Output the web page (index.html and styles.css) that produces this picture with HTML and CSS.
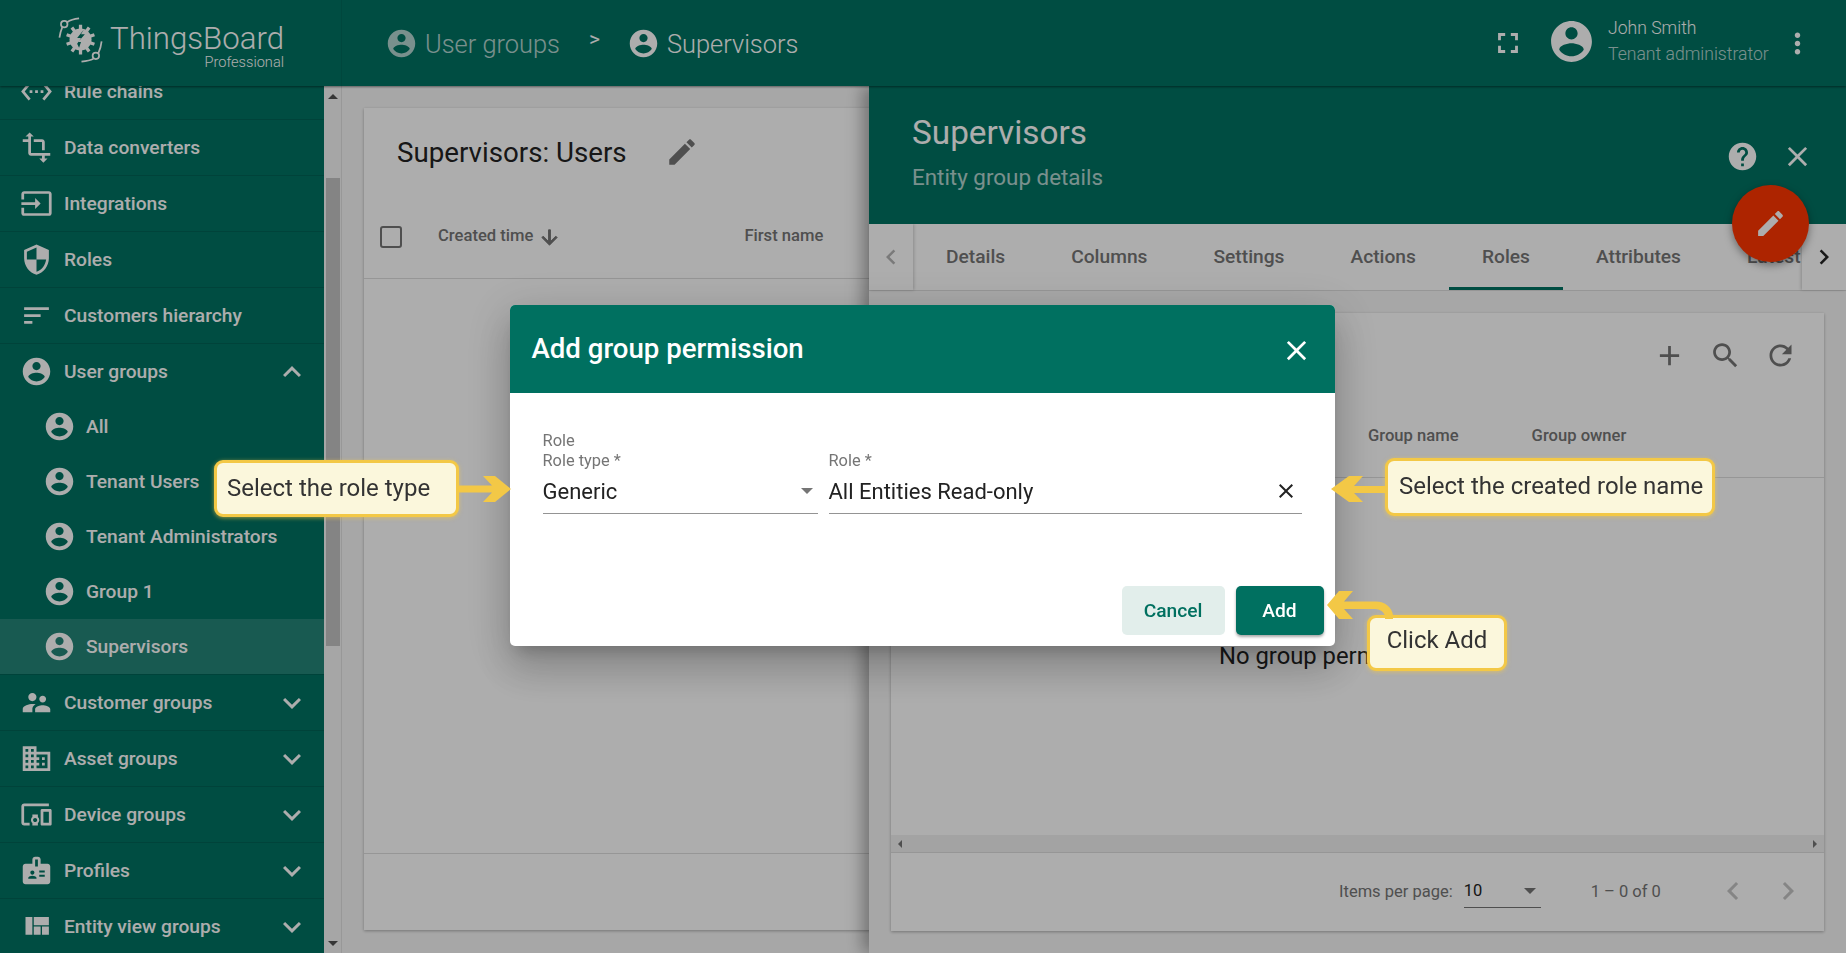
FILE: index.html
```html
<!doctype html>
<html lang="en">
<head>
<meta charset="utf-8">
<title>ThingsBoard - Add group permission</title>
<link rel="stylesheet" href="styles.css">
</head>
<body>

<svg class="sprite" xmlns="http://www.w3.org/2000/svg">
  <symbol id="i-account" viewBox="0 0 24 24"><path d="M12 2C6.48 2 2 6.48 2 12s4.48 10 10 10 10-4.48 10-10S17.52 2 12 2zm0 3c1.66 0 3 1.34 3 3s-1.34 3-3 3-3-1.34-3-3 1.34-3 3-3zm0 14.2c-2.5 0-4.71-1.28-6-3.22.03-1.99 4-3.08 6-3.08 1.99 0 5.97 1.09 6 3.08-1.29 1.94-3.5 3.22-6 3.22z"/></symbol>
  <symbol id="i-ethernet" viewBox="0 0 24 24"><path d="M7.77 6.76L6.23 5.48.82 12l5.41 6.52 1.54-1.28L3.42 12l4.35-5.24zM7 13h2v-2H7v2zm10-2h-2v2h2v-2zm-6 2h2v-2h-2v2zm6.77-7.52l-1.54 1.28L20.58 12l-4.35 5.24 1.54 1.28L23.18 12l-5.41-6.52z"/></symbol>
  <symbol id="i-transform" viewBox="0 0 24 24"><path d="M22 18v-2H8V4h2L7 1 4 4h2v2H2v2h4v8c0 1.1.9 2 2 2h8v2h-2l3 3 3-3h-2v-2h4zM10 8h6v6h2V8c0-1.1-.9-2-2-2h-6v2z"/></symbol>
  <symbol id="i-input" viewBox="0 0 24 24"><path d="M21 3.01H3c-1.1 0-2 .9-2 2V9h2V4.99h18v14.03H3V15H1v4.01c0 1.1.9 1.98 2 1.98h18c1.1 0 2-.88 2-1.98v-14c0-1.11-.9-2-2-2zM11 16l4-4-4-4v3H1v2h10v3z"/></symbol>
  <symbol id="i-security" viewBox="0 0 24 24"><path d="M12 1L3 5v6c0 5.55 3.84 10.74 9 12 5.16-1.26 9-6.45 9-12V5l-9-4zm0 10.99h7c-.53 4.12-3.28 7.79-7 8.94V12H5V6.3l7-3.11v8.8z"/></symbol>
  <symbol id="i-sort" viewBox="0 0 24 24"><path d="M3 18h6v-2H3v2zM3 6v2h18V6H3zm0 7h12v-2H3v2z"/></symbol>
  <symbol id="i-supervisor" viewBox="0 0 24 24"><path d="M16.5 12c1.38 0 2.49-1.12 2.49-2.5S17.88 7 16.5 7C15.12 7 14 8.12 14 9.5s1.12 2.5 2.5 2.5zM9 11c1.66 0 2.99-1.34 2.99-3S10.66 5 9 5C7.34 5 6 6.34 6 8s1.34 3 3 3zm7.5 3c-1.83 0-5.5.92-5.5 2.75V19h11v-2.25c0-1.83-3.67-2.75-5.5-2.75zM9 13c-2.33 0-7 1.17-7 3.5V19h7v-2.25c0-.85.33-2.34 2.37-3.47C10.5 13.1 9.66 13 9 13z"/></symbol>
  <symbol id="i-domain" viewBox="0 0 24 24"><path d="M12 7V3H2v18h20V7H12zM6 19H4v-2h2v2zm0-4H4v-2h2v2zm0-4H4V9h2v2zm0-4H4V5h2v2zm4 12H8v-2h2v2zm0-4H8v-2h2v2zm0-4H8V9h2v2zm0-4H8V5h2v2zm10 12h-8v-2h2v-2h-2v-2h2v-2h-2V9h8v10zm-2-8h-2v2h2v-2zm0 4h-2v2h2v-2z"/></symbol>
  <symbol id="i-devices" viewBox="0 0 24 24"><path d="M3 6h18V4H3c-1.1 0-2 .9-2 2v12c0 1.1.9 2 2 2h4v-2H3V6zm10 6H9v1.78c-.61.55-1 1.33-1 2.22s.39 1.67 1 2.22V20h4v-1.78c.61-.55 1-1.34 1-2.22s-.39-1.67-1-2.22V12zm-2 5.5c-.83 0-1.5-.67-1.5-1.5s.67-1.5 1.5-1.5 1.5.67 1.5 1.5-.67 1.5-1.5 1.5zM22 8h-6c-.5 0-1 .5-1 1v10c0 .5.5 1 1 1h6c.5 0 1-.5 1-1V9c0-.5-.5-1-1-1zm-1 10h-4v-8h4v8z"/></symbol>
  <symbol id="i-badge" viewBox="0 0 24 24"><path d="M20 7h-5V4c0-1.1-.9-2-2-2h-2c-1.1 0-2 .9-2 2v3H4c-1.1 0-2 .9-2 2v11c0 1.1.9 2 2 2h16c1.1 0 2-.9 2-2V9c0-1.1-.9-2-2-2zM9 12c.83 0 1.5.67 1.5 1.5S9.83 15 9 15s-1.5-.67-1.5-1.5S8.17 12 9 12zm3 6H6v-.75c0-1 2-1.5 3-1.5s3 .5 3 1.5V18zm1-9h-2V4h2v5zm5 7.5h-4V15h4v1.5zm0-3h-4V12h4v1.5z"/></symbol>
  <symbol id="i-quilt" viewBox="0 0 24 24"><path d="M10 18h5v-6h-5v6zm-6 0h5V5H4v13zm12 0h5v-6h-5v6zM10 5v6h11V5H10z"/></symbol>
  <symbol id="i-more" viewBox="0 0 24 24"><path d="M16.59 8.59L12 13.17 7.41 8.59 6 10l6 6 6-6z"/></symbol>
  <symbol id="i-less" viewBox="0 0 24 24"><path d="M12 8l-6 6 1.41 1.41L12 10.83l4.59 4.58L18 14z"/></symbol>
  <symbol id="i-fullscreen" viewBox="0 0 24 24"><path d="M7 14H5v5h5v-2H7v-3zm-2-4h2V7h3V5H5v5zm12 7h-3v2h5v-5h-2v3zM14 5v2h3v3h2V5h-5z"/></symbol>
  <symbol id="i-dots" viewBox="0 0 24 24"><path d="M12 8c1.1 0 2-.9 2-2s-.9-2-2-2-2 .9-2 2 .9 2 2 2zm0 2c-1.1 0-2 .9-2 2s.9 2 2 2 2-.9 2-2-.9-2-2-2zm0 6c-1.1 0-2 .9-2 2s.9 2 2 2 2-.9 2-2-.9-2-2-2z"/></symbol>
  <symbol id="i-help" viewBox="0 0 24 24"><path d="M12 2C6.48 2 2 6.48 2 12s4.48 10 10 10 10-4.48 10-10S17.52 2 12 2zm1 17h-2v-2h2v2zm2.07-7.75l-.9.92C13.45 12.9 13 13.5 13 15h-2v-.5c0-1.1.45-2.1 1.17-2.83l1.24-1.26c.37-.36.59-.86.59-1.41 0-1.1-.9-2-2-2s-2 .9-2 2H8c0-2.21 1.79-4 4-4s4 1.79 4 4c0 .88-.36 1.68-.93 2.25z"/></symbol>
  <symbol id="i-close" viewBox="0 0 24 24"><path d="M19 6.41L17.59 5 12 10.59 6.41 5 5 6.41 10.59 12 5 17.59 6.41 19 12 13.41 17.59 19 19 17.59 13.41 12z"/></symbol>
  <symbol id="i-edit" viewBox="0 0 24 24"><path d="M3 17.25V21h3.75L17.81 9.94l-3.75-3.75L3 17.25zM20.71 7.04c.39-.39.39-1.02 0-1.41l-2.34-2.34c-.39-.39-1.02-.39-1.41 0l-1.83 1.83 3.75 3.75 1.83-1.83z"/></symbol>
  <symbol id="i-add" viewBox="0 0 24 24"><path d="M19 13h-6v6h-2v-6H5v-2h6V5h2v6h6v2z"/></symbol>
  <symbol id="i-search" viewBox="0 0 24 24"><path d="M15.5 14h-.79l-.28-.27C15.41 12.59 16 11.11 16 9.5 16 5.91 13.09 3 9.5 3S3 5.91 3 9.5 5.91 16 9.5 16c1.61 0 3.09-.59 4.23-1.57l.27.28v.79l5 4.99L20.49 19l-4.99-5zm-6 0C7.01 14 5 11.99 5 9.5S7.01 5 9.5 5 14 7.01 14 9.5 11.99 14 9.5 14z"/></symbol>
  <symbol id="i-refresh" viewBox="0 0 24 24"><path d="M17.65 6.35C16.2 4.9 14.21 4 12 4c-4.42 0-7.99 3.58-7.99 8s3.57 8 7.99 8c3.73 0 6.84-2.55 7.73-6h-2.08c-.82 2.33-3.04 4-5.65 4-3.31 0-6-2.69-6-6s2.69-6 6-6c1.66 0 3.14.69 4.22 1.78L13 11h7V4l-2.35 2.35z"/></symbol>
  <symbol id="i-down" viewBox="0 0 24 24"><path d="M20 12l-1.41-1.41L13 16.17V4h-2v12.17l-5.58-5.59L4 12l8 8 8-8z"/></symbol>
  <symbol id="i-left" viewBox="0 0 24 24"><path d="M15.41 7.41L14 6l-6 6 6 6 1.41-1.41L10.83 12z"/></symbol>
  <symbol id="i-right" viewBox="0 0 24 24"><path d="M10 6L8.59 7.41 13.17 12l-4.58 4.59L10 18l6-6z"/></symbol>
</svg>

<div class="page">

  <header class="topbar">
    <div class="logo">
      <svg class="logo-mark" viewBox="0 0 48 48" fill="none" stroke="#fff">
        <path d="M23.5 23.5V8M23.5 23.5l9-12.5M23.5 23.5l14.5-5M23.5 23.5l14.5 5M23.5 23.5l9 12.5M23.5 23.5V39M23.5 23.5l-9 12.5M23.5 23.5L9 28.5M23.5 23.5L9 18.5M23.5 23.5l-9-12.5" stroke-width="3.4"/>
        <circle cx="23.5" cy="23.5" r="11.5" fill="#fff" stroke="none"/>
        <path d="M27 13l-7 9h4l-4 6 2 4 2-6h-3l7-8h-4z" fill="#007262" stroke="none"/>
        <circle cx="6.5" cy="7.5" r="3.4" stroke-width="1.8"/>
        <circle cx="39.5" cy="40.5" r="3.4" stroke-width="1.8"/>
        <path d="M9.5 5.5C13 3 17 2 22 1.5M4.5 10.5C3 14 2 18 1.5 21.5M42 38C44 34 45 30 45.5 25.5M37 43.5C33 45.5 29 46 24.5 46.5" stroke-width="1.8"/>
      </svg>
      <div class="logo-text">
        <span class="logo-name">ThingsBoard</span>
        <span class="logo-sub">Professional</span>
      </div>
    </div>
    <div class="crumbs">
      <svg class="ic crumb-dim"><use href="#i-account"/></svg>
      <span class="crumb-label crumb-dim">User groups</span>
      <span class="crumb-sep">&gt;</span>
      <svg class="ic"><use href="#i-account"/></svg>
      <span class="crumb-label">Supervisors</span>
    </div>
    <div class="user-box">
      <svg class="ic ic-full"><use href="#i-fullscreen"/></svg>
      <svg class="ic-avatar"><use href="#i-account"/></svg>
      <div class="user-text">
        <div class="user-name">John Smith</div>
        <div class="user-role">Tenant administrator</div>
      </div>
      <svg class="ic ic-menu"><use href="#i-dots"/></svg>
    </div>
  </header>

  <div class="middle">
    <nav class="sidebar">
      <div class="nav-scroll">
        <ul class="nav-list">
          <li class="nav-item"><svg class="ic"><use href="#i-ethernet"/></svg>Rule chains</li>
          <li class="nav-item"><svg class="ic"><use href="#i-transform"/></svg>Data converters</li>
          <li class="nav-item"><svg class="ic"><use href="#i-input"/></svg>Integrations</li>
          <li class="nav-item"><svg class="ic"><use href="#i-security"/></svg>Roles</li>
          <li class="nav-item"><svg class="ic"><use href="#i-sort"/></svg>Customers hierarchy</li>
          <li class="nav-item nav-open">
            <div class="nav-head"><svg class="ic"><use href="#i-account"/></svg>User groups<svg class="ic nav-chev"><use href="#i-less"/></svg></div>
            <ul class="nav-sub">
              <li><svg class="ic"><use href="#i-account"/></svg>All</li>
              <li><svg class="ic"><use href="#i-account"/></svg>Tenant Users</li>
              <li><svg class="ic"><use href="#i-account"/></svg>Tenant Administrators</li>
              <li><svg class="ic"><use href="#i-account"/></svg>Group 1</li>
              <li class="active"><svg class="ic"><use href="#i-account"/></svg>Supervisors</li>
            </ul>
          </li>
          <li class="nav-item"><svg class="ic"><use href="#i-supervisor"/></svg>Customer groups<svg class="ic nav-chev"><use href="#i-more"/></svg></li>
          <li class="nav-item"><svg class="ic"><use href="#i-domain"/></svg>Asset groups<svg class="ic nav-chev"><use href="#i-more"/></svg></li>
          <li class="nav-item"><svg class="ic"><use href="#i-devices"/></svg>Device groups<svg class="ic nav-chev"><use href="#i-more"/></svg></li>
          <li class="nav-item"><svg class="ic"><use href="#i-badge"/></svg>Profiles<svg class="ic nav-chev"><use href="#i-more"/></svg></li>
          <li class="nav-item"><svg class="ic"><use href="#i-quilt"/></svg>Entity view groups<svg class="ic nav-chev"><use href="#i-more"/></svg></li>
        </ul>
      </div>
      <div class="vscroll">
        <span class="vscroll-up"></span>
        <span class="vscroll-thumb"></span>
        <span class="vscroll-down"></span>
      </div>
    </nav>

    <main class="content">
      <section class="card users-card">
        <div class="card-title">
          <span>Supervisors: Users</span>
          <svg class="ic ic-dark title-edit"><use href="#i-edit"/></svg>
        </div>
        <div class="table-head users-head">
          <span class="checkbox"></span>
          <span class="col-created">Created time</span>
          <svg class="ic-sort"><use href="#i-down"/></svg>
          <span class="col-first">First name</span>
        </div>
        <div class="grow"></div>
        <div class="users-foot"></div>
      </section>

      <aside class="drawer">
        <div class="drawer-head">
          <div class="drawer-title">Supervisors</div>
          <div class="drawer-sub">Entity group details</div>
          <div class="drawer-actions">
            <svg class="ic"><use href="#i-help"/></svg>
            <svg class="ic"><use href="#i-close"/></svg>
          </div>
        </div>
        <div class="fab"><svg class="ic"><use href="#i-edit"/></svg></div>
        <div class="tabs">
          <div class="tab-page tab-page-left"><svg class="ic"><use href="#i-left"/></svg></div>
          <div class="tab-list">
            <span class="tab">Details</span>
            <span class="tab">Columns</span>
            <span class="tab">Settings</span>
            <span class="tab">Actions</span>
            <span class="tab tab-active">Roles</span>
            <span class="tab">Attributes</span>
            <span class="tab">Latest telemetry</span>
          </div>
          <div class="tab-page tab-page-right"><svg class="ic"><use href="#i-right"/></svg></div>
        </div>
        <div class="drawer-body">
          <section class="card perm-card">
            <div class="perm-tools">
              <svg class="ic ic-dark"><use href="#i-add"/></svg>
              <svg class="ic ic-dark"><use href="#i-search"/></svg>
              <svg class="ic ic-dark"><use href="#i-refresh"/></svg>
            </div>
            <div class="table-head perm-head">
              <span class="col-group">Group name</span>
              <span class="col-owner">Group owner</span>
            </div>
            <div class="grow perm-empty">No group permissions</div>
            <div class="hscroll"><span class="hscroll-left"></span><span class="hscroll-right"></span></div>
            <div class="pager">
              <span class="pager-label">Items per page:</span>
              <span class="pager-select">10<i class="caret"></i></span>
              <span class="pager-range">1 – 0 of 0</span>
              <svg class="ic ic-faint pager-prev"><use href="#i-left"/></svg>
              <svg class="ic ic-faint pager-next"><use href="#i-right"/></svg>
            </div>
          </section>
        </div>
      </aside>
    </main>
  </div>
</div>

<div class="overlay">
  <div class="dialog">
    <div class="dialog-head">
      <span>Add group permission</span>
      <svg class="ic dialog-close"><use href="#i-close"/></svg>
    </div>
    <div class="dialog-body">
      <div class="group-label">Role</div>
      <div class="fields">
        <div class="field field-type">
          <label>Role type *</label>
          <div class="field-value">Generic<i class="caret"></i></div>
        </div>
        <div class="field field-role">
          <label>Role *</label>
          <div class="field-value">All Entities Read-only<svg class="field-clear"><use href="#i-close"/></svg></div>
        </div>
      </div>
    </div>
    <div class="dialog-actions">
      <button class="btn btn-cancel">Cancel</button>
      <button class="btn btn-add">Add</button>
    </div>
  </div>

  <!-- tutorial callouts -->
  <div class="callout callout-type">Select the role type</div>
  <svg class="arrow arrow-type" viewBox="0 0 52 26"><path d="M0 9.5H33L24 0H36L52 13 36 26H24L33 16.5H0z"/></svg>
  <div class="callout callout-role">Select the created role name</div>
  <svg class="arrow arrow-role" viewBox="0 0 54 26"><path d="M54 10H23L32 0H18L0 13 18 26H32L23 17H54z"/></svg>
  <div class="callout callout-add">Click Add</div>
  <svg class="arrow arrow-add" viewBox="0 0 66 28"><path d="M0 14L12 0H26L17 10.5H49c9 0 16 6 17 13.5v4h-8v-3c-1-4-5-7-10-7H17L26 28H12z"/></svg>
</div>

</body>
</html>
```

FILE: styles.css
```css
* {box-sizing: border-box;}
html, body {height: 100%;}
body {margin: 0; overflow: hidden; background: #f7f7f7; font-family: Roboto, "Liberation Sans", sans-serif; color: #222;}
ul {list-style: none; margin: 0; padding: 0;}
.sprite {display: none;}
.ic {width: 33px; height: 33px; fill: currentColor; flex: none;}
.ic-dark {color: #757575;}
.ic-faint {color: #c4c4c4;}
.grow {flex: 1;}

.page {display: flex; flex-direction: column; height: 953px;}

/* top bar */
.topbar {height: 86px; flex: none; display: flex; align-items: center; background: #007262; color: #fff; box-shadow: 0 1px 2px rgba(0,0,0,.45); position: relative; z-index: 2;}
.logo {width: 342px; height: 86px; flex: none; display: flex; padding: 17px 0 0 58px; border-right: 1px solid rgba(0,0,0,.08);}
.logo-mark {width: 46px; height: 46px; flex: none;}
.logo-text {display: flex; flex-direction: column; align-items: flex-end; margin-left: 6px; width: 174px;}
.logo-name {font-size: 31.2px; font-weight: 300; line-height: 38px; margin-top: 3px;}
.logo-sub {font-size: 14.6px; font-weight: 300; line-height: 14px; margin-top: -3px;}
.crumbs {display: flex; align-items: center; padding-left: 43px; flex: 1;}
.crumb-label {font-size: 25.4px; font-weight: 300; margin: 1px 0 0 7px;}
.crumb-dim {opacity: .7;}
.crumb-sep {font-size: 21px; margin: -8px 27px 0 29px;}
.user-box {display: flex; align-items: center; padding-right: 32px;}
.ic-full {width: 34px; height: 34px; margin-right: 22px;}
.ic-avatar {width: 49px; height: 49px; fill: currentColor; margin-top: -4px;}
.user-text {margin-left: 12px; width: 173px; margin-top: -4px;}
.user-name {font-size: 17.6px; font-weight: 300; line-height: 26px;}
.user-role {font-size: 17.6px; font-weight: 300; line-height: 26px; opacity: .7;}

/* sidebar */
.middle {flex: 1; display: flex; min-height: 0;}
.sidebar {width: 342px; flex: none; display: flex; background: #007262; color: #fff; overflow: hidden;}
.nav-scroll {width: 324px; overflow: hidden;}
.nav-list {margin-top: -22px;}
.nav-item {height: 56px; display: flex; align-items: center; padding-left: 20px; font-size: 19.2px; font-weight: 500; border-bottom: 1px solid rgba(0,0,0,.12);}
.nav-item > .ic:first-child, .nav-head > .ic:first-child {margin-right: 11px;}
.nav-sub .ic {margin-right: 10px;}
.nav-chev {width: 36px; height: 36px; margin-left: auto; margin-right: 14px;}
.nav-open {display: block; height: auto; padding: 0;}
.nav-head {height: 55px; display: flex; align-items: center; padding-left: 20px;}
.nav-sub li {height: 55px; display: flex; align-items: center; padding-left: 43px;}
.nav-sub .active {background: rgba(255,255,255,.14);}
.vscroll {width: 18px; background: #f5f5f5; display: flex; flex-direction: column; align-items: center; border-right: 1px solid #e0e0e0;}
.vscroll-up {border: 5px solid transparent; border-top: 0; border-bottom: 5px solid #505050; margin-top: 8px;}
.vscroll-thumb {width: 14px; height: 468px; background: #c3c3c3; margin-top: 79px;}
.vscroll-down {border: 5px solid transparent; border-bottom: 0; border-top: 5px solid #505050; margin-top: auto; margin-bottom: 7px;}

/* page content */
.content {flex: 1; position: relative; padding: 22px; min-width: 0;}
.card {background: #fff; box-shadow: 0 1px 3px rgba(0,0,0,.3); display: flex; flex-direction: column;}
.users-card {height: 822px;}
.card-title {height: 86px; flex: none; display: flex; align-items: center; padding: 2px 0 0 33px; font-size: 27.7px;}
.title-edit {width: 34px; height: 34px; margin-left: 38px;}
.table-head {flex: none; display: flex; align-items: center; font-size: 16.6px; font-weight: 500; color: #757575; border-bottom: 1px solid #ddd;}
.users-head {height: 85px; padding: 0 0 1px 16px;}
.checkbox {width: 22px; height: 22px; border: 2.5px solid #757575; border-radius: 3px; margin-top: 2px;}
.col-created {margin-left: 36px;}
.ic-sort {width: 23px; height: 23px; fill: #757575; stroke: #757575; stroke-width: 1; margin-left: 5px; margin-top: 4px;}
.col-first {margin-left: 183px;}
.users-foot {height: 77px; flex: none; border-top: 1px solid #ddd;}

/* details drawer */
.drawer {position: absolute; top: 0; right: 0; bottom: 0; width: 977px; background: #f7f7f7; display: flex; flex-direction: column; box-shadow: -6px 0 16px rgba(0,0,0,.35);}
.drawer-head {height: 138px; flex: none; background: #007262; color: #fff; position: relative; padding: 26px 0 0 43px;}
.drawer-title {font-size: 33.3px; line-height: 42px;}
.drawer-sub {font-size: 22.4px; line-height: 28px; opacity: .7; margin-top: 9px;}
.drawer-actions {position: absolute; top: 54px; right: 32px; display: flex; gap: 22px;}
.fab {position: absolute; top: 99px; right: 37px; width: 77px; height: 77px; border-radius: 50%; background: #ff3600; color: #fff; display: flex; align-items: center; justify-content: center; box-shadow: 0 3px 8px rgba(0,0,0,.4); z-index: 1;}
.tabs {height: 67px; flex: none; display: flex; background: #fff; border-bottom: 1px solid #ddd;}
.tab-page {width: 44px; flex: none; display: flex; align-items: center; justify-content: center;}
.tab-page .ic {width: 30px; height: 30px;}
.tab-page-left {color: #b4b4b4; box-shadow: 1px 0 3px rgba(0,0,0,.2);}
.tab-page-right {color: #222; box-shadow: -1px 0 3px rgba(0,0,0,.2);}
.tab-list {flex: 1; display: flex; overflow: hidden; white-space: nowrap;}
.tab {height: 66px; display: flex; align-items: center; padding: 0 33px 2px; font-size: 19.2px; font-weight: 500; color: #757575;}
.tab-active {border-bottom: 3px solid #007262; padding-top: 1px; padding-bottom: 0;}
.drawer-body {flex: 1; padding: 22px; min-height: 0; display: flex;}
.perm-card {flex: 1;}
.perm-tools {height: 84px; flex: none; display: flex; justify-content: flex-end; align-items: center; gap: 22.5px; padding: 0 27px 0 0;}
.perm-head {height: 81px; padding-bottom: 3px;}
.col-group {margin-left: 477px;}
.col-owner {margin-left: 73px;}
.perm-empty {display: flex; align-items: center; font-size: 23.8px; padding: 0 0 2px 328px;}
.hscroll {height: 18px; flex: none; background: #f0f0f0; border-bottom: 1px solid #ddd; display: flex; justify-content: space-between; align-items: center; padding: 0 7px;}
.hscroll-left {border: 4.5px solid transparent; border-left: 0; border-right: 4.5px solid #757575;}
.hscroll-right {border: 4.5px solid transparent; border-right: 0; border-left: 4.5px solid #757575;}
.pager {height: 78px; flex: none; display: flex; align-items: center; font-size: 16.5px; color: #757575; padding-left: 448px; padding-bottom: 2px;}
.pager-select {width: 77px; height: 34px; margin-left: 11px; display: flex; align-items: center; justify-content: space-between; color: #222; border-bottom: 1px solid #757575; padding-right: 5px;}
.caret {display: inline-block; border: 6px solid transparent; border-bottom: 0; border-top: 6px solid #757575;}
.pager-range {margin-left: 50px;}
.pager-prev {width: 36px; height: 36px; margin-left: 54px;}
.pager-next {width: 36px; height: 36px; margin-left: 19px;}

/* modal + callouts */
.overlay {position: fixed; inset: 0; z-index: 10; background: rgba(0,0,0,.32); display: flex; align-items: center; justify-content: center;}
.dialog {width: 825px; height: 341px; margin: 0 2px 2px 0; background: #fff; border-radius: 5px; overflow: hidden; display: flex; flex-direction: column; box-shadow: 0 11px 15px -7px rgba(0,0,0,.2), 0 24px 38px 3px rgba(0,0,0,.14), 0 9px 46px 8px rgba(0,0,0,.12);}
.dialog-head {height: 88px; flex: none; background: #007060; color: #fff; display: flex; align-items: center; justify-content: space-between; padding: 0 22px 2px; font-size: 27.6px; font-weight: 500;}
.dialog-close {margin-top: 4px;}
.dialog-body {flex: 1; padding: 38px 33px 0;}
.group-label {font-size: 16.5px; line-height: 20px; color: #757575;}
.fields {display: flex; gap: 11px;}
.field label {display: block; font-size: 16.4px; line-height: 20px; color: #757575;}
.field-type {width: 275px;}
.field-role {flex: 1;}
.field-value {height: 43px; display: flex; align-items: center; justify-content: space-between; font-size: 22px; border-bottom: 1px solid #949494; padding: 0 5px 2px 0;}
.field-clear {width: 24px; height: 24px; fill: #222; margin-right: -1px;}
.dialog-actions {flex: none; display: flex; justify-content: flex-end; gap: 11px; padding: 0 11px 11px;}
.btn {height: 49px; border: 0; border-radius: 5px; font: 500 19.2px Roboto, sans-serif;}
.btn-cancel {width: 103px; background: #e2eeeb; color: #007060;}
.btn-add {width: 88px; background: #007060; color: #fff; box-shadow: 0 2px 3px rgba(0,0,0,.35);}

.callout {position: absolute; display: flex; align-items: center; background: #fbf7dc; border: 3px solid #f3c846; border-radius: 9px; font-size: 24px; color: #333; box-shadow: 0 1px 4px rgba(243,200,70,.6);}
.callout-type {left: 214px; top: 460px; width: 245px; height: 57px; padding: 0 0 2px 10px;}
.callout-role {left: 1385px; top: 458px; width: 330px; height: 58px; padding: 0 0 2px 11px;}
.callout-add {left: 1367px; top: 615px; width: 140px; height: 56px; justify-content: center; padding-bottom: 7px;}
.arrow {position: absolute; fill: #f3c846;}
.arrow-type {left: 459px; top: 476px; width: 52px; height: 26px;}
.arrow-role {left: 1331px; top: 476px; width: 54px; height: 26px;}
.arrow-add {left: 1327px; top: 591px; width: 66px; height: 28px;}
```
